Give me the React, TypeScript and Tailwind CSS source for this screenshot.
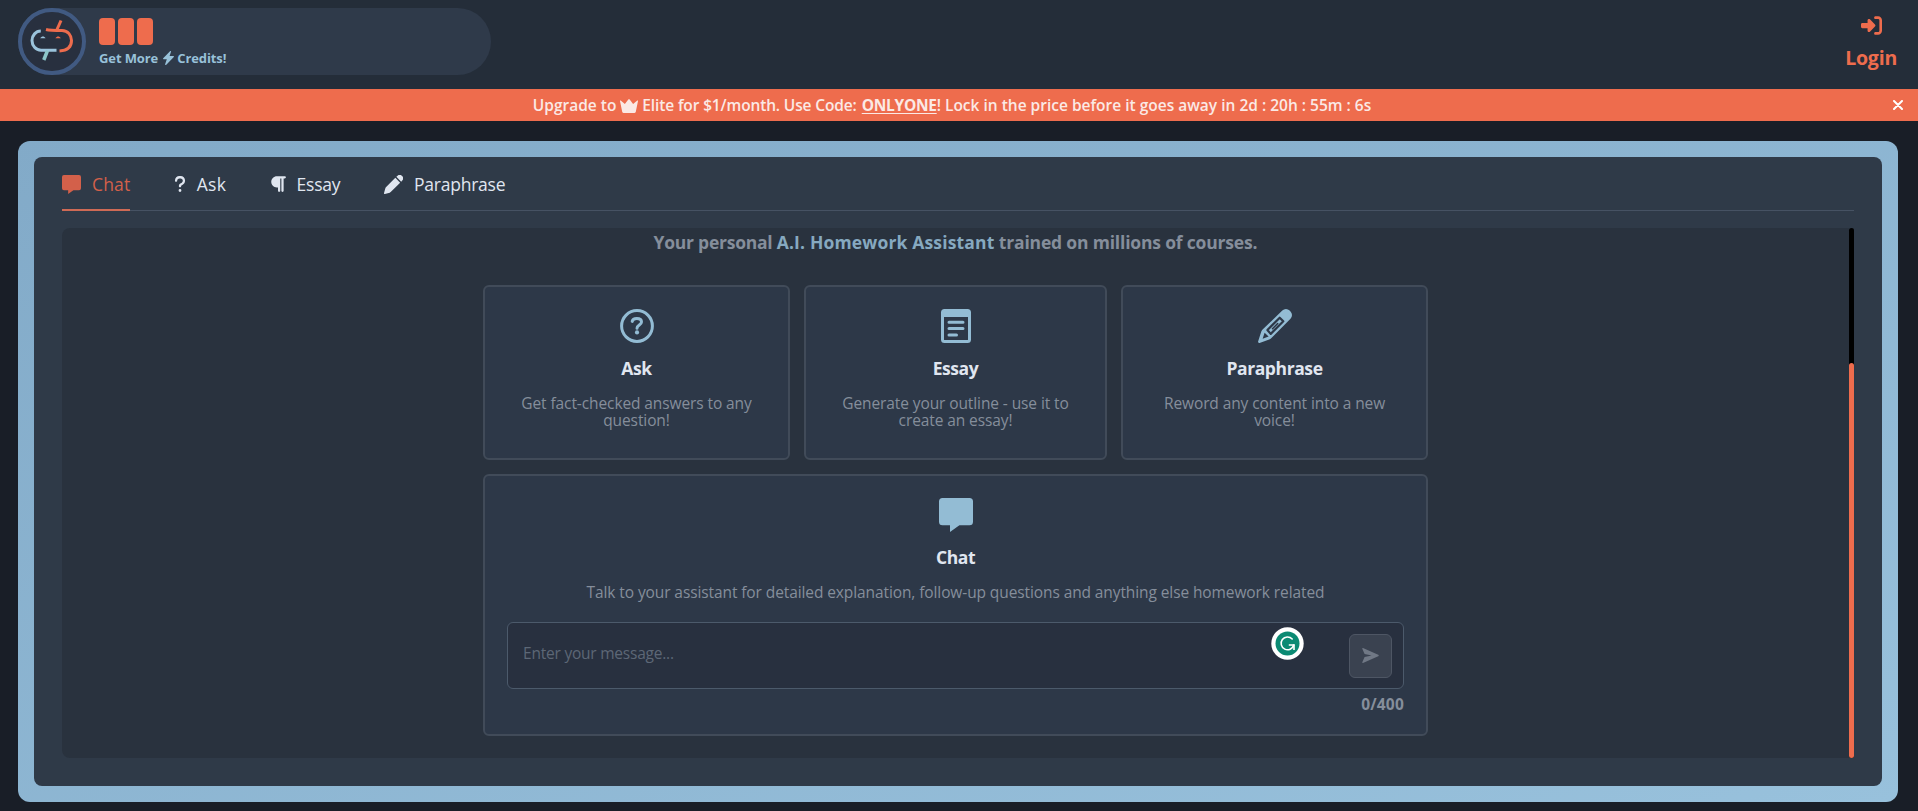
import React, { useState } from 'react';
import { FaParagraph, FaQuestion, FaRightToBracket } from 'react-icons/fa6';

type IconProps = { className?: string };

const ChatIcon: React.FC<IconProps> = ({ className }) => (
  <svg className={className} viewBox="0 0 34 34" fill="currentColor">
    <path d="M3.5 0h27A3.5 3.5 0 0 1 34 3.5v20.3a3.5 3.5 0 0 1-3.5 3.5H20.4L11 34v-6.7H3.5A3.5 3.5 0 0 1 0 23.8V3.5A3.5 3.5 0 0 1 3.5 0Z" />
  </svg>
);

const PenIcon: React.FC<IconProps> = ({ className }) => (
  <svg className={className} viewBox="2 2 20 20" fill="currentColor">
    <path d="M13.94 5 19 10.06 9.06 20a2.25 2.25 0 0 1-1 .58l-5.11 1.4a.75.75 0 0 1-.92-.93l1.4-5.11a2.25 2.25 0 0 1 .57-1L13.94 5Zm7.09-2.03a3.58 3.58 0 0 1 0 5.06l-.97.97L15 3.94l.97-.97a3.58 3.58 0 0 1 5.06 0Z" />
  </svg>
);

const AskCircleIcon: React.FC<IconProps> = ({ className }) => (
  <svg className={className} viewBox="0 0 34 34" fill="none" stroke="currentColor" strokeWidth={3}>
    <circle cx="17" cy="17" r="15.4" />
    <path d="M12.2 12.4c.4-2 2.2-2.9 4.6-2.9 2.8 0 4.7 1.3 4.7 3.5 0 2.9-4.5 3.1-4.5 6.2" strokeLinecap="round" />
    <circle cx="17" cy="23.4" r="2.1" fill="currentColor" stroke="none" />
  </svg>
);

const DocumentIcon: React.FC<IconProps> = ({ className }) => (
  <svg className={className} viewBox="0 0 34 34" fill="none" stroke="currentColor" strokeWidth={3}>
    <rect x="3.5" y="1.5" width="27" height="31" rx="2" />
    <path d="M3.5 1.5h27v6.5h-27z" fill="currentColor" stroke="none" />
    <path d="M10 13.2h14M10 19.5h14M10 26h7.5" strokeLinecap="round" />
  </svg>
);

const PencilIcon: React.FC<IconProps> = ({ className }) => (
  <svg className={className} viewBox="0 0 34 34" fill="none">
    <path
      d="M24.3 1.5a5.2 5.2 0 0 1 7.3 0l.9.9a5.2 5.2 0 0 1 0 7.3L13.2 29.2a5 5 0 0 1-2 1.2L1.6 33.9C.6 34.2-.2 33.4.1 32.4l3.2-9.8c.3-.8.7-1.4 1.3-2L24.3 1.5Z"
      fill="currentColor"
    />
    <path d="M21.7 8.7 25.3 12.3 12.7 24.9 9.4 21Z" stroke="#2d3848" strokeWidth={2.2} strokeLinejoin="round" fill="currentColor" />
    <path d="m14.5 19.7 5.2-5.2" stroke="#2d3848" strokeWidth={1.6} strokeLinecap="round" />
    <path d="m6.6 23.8-2 6 6-2.2Z" fill="#2d3848" />
  </svg>
);

const SendIcon: React.FC<IconProps> = ({ className }) => (
  <svg className={className} viewBox="0 0 17 15" fill="currentColor">
    <path d="M.3.8C.1.3.5-.1 1 .1l15.2 6.7c.7.3.7 1.1 0 1.4L1 14.9c-.5.2-.9-.2-.7-.7L2.6 9l7-1.5-7-1.5Z" />
  </svg>
);

const CrownIcon: React.FC<IconProps> = ({ className }) => (
  <svg className={className} viewBox="0 0 18 14" fill="currentColor">
    <path d="M.7 1.6 4.9 5.1 8.3.6c.4-.6 1-.6 1.4 0l3.4 4.5 4.2-3.5c.4-.3.8 0 .7.4L15.8 12.8c-.1.7-.6 1.1-1.3 1.1h-11c-.7 0-1.2-.4-1.3-1.1L0 2c-.1-.4.3-.7.7-.4Z" />
  </svg>
);

const BoltIcon: React.FC<IconProps> = ({ className }) => (
  <svg className={className} viewBox="0 0 11 14" fill="currentColor">
    <path d="M7 .2C7.5-.2 8.3.1 8 .8L6.6 5h3.7c.7 0 .9.6.5 1L3.3 13.7c-.6.5-1.4.1-1.1-.6L3.8 8.3H.6c-.6 0-.8-.6-.4-1Z" />
  </svg>
);

const Logo: React.FC<IconProps> = ({ className }) => (
  <svg className={className} viewBox="0 0 60 60" fill="none" strokeWidth={3}>
    <path d="M18.8 19c-5 0-8.8 4.500-8.8 9.500S13.800 38 19 38.200h15.500" stroke="#9ac3dc" />
    <path d="M25.500 38.500 21.800 48" stroke="#8cc6c8" strokeWidth={3.5} />
    <path d="M24 17.500c4 1 11 1 16 1 6 0 9.500 5 9.500 10 0 6-4 10-12 10.500" stroke="#ee6c4d" />
    <path d="m34.800 18 4.200-9.500" stroke="#ee6c4d" />
    <path d="M18.200 26.300c1.500-2.400 4-2.400 5.400 0Z" fill="#9ac3dc" />
    <path d="M33.400 26.300c1.500-2.400 4-2.400 5.400 0Z" fill="#ee6c4d" />
  </svg>
);

const tabs = [
  { name: 'Chat', icon: <ChatIcon className="size-[19px] mr-[11px]" />, spacing: 'tracking-[0.15px]' },
  { name: 'Ask', icon: <FaQuestion className="w-3 h-[18px] mr-[11px]" />, spacing: 'tracking-[0.2px]' },
  { name: 'Essay', icon: <FaParagraph className="w-4 h-[18px] mr-[11px]" />, spacing: 'tracking-[-0.2px]' },
  { name: 'Paraphrase', icon: <PenIcon className="size-[19px] mr-[11px]" />, spacing: 'tracking-[-0.22px]' },
];

const cards = [
  { title: 'Ask', text: 'Get fact-checked answers to any question!', icon: <AskCircleIcon className="size-[34px]" />, width: 'w-[307px]' },
  { title: 'Essay', text: 'Generate your outline - use it to create an essay!', icon: <DocumentIcon className="size-[34px]" />, width: 'w-[303px]' },
  { title: 'Paraphrase', text: 'Reword any content into a new voice!', icon: <PencilIcon className="size-[34px]" />, width: 'w-[307px]' },
];

const Header: React.FC = () => (
  <header className="h-[89px] shrink-0 flex items-start justify-between bg-[#242d39] pl-[18px] pr-[21px]">
    <div className="mt-2 flex w-[473px] h-[67px] rounded-full bg-[#2f3a4a]">
      <div className="w-[68px] h-[67px] rounded-full border-4 border-[#415a82] bg-[#28303f]">
        <Logo className="size-[60px]" />
      </div>
      <div className="ml-[13px] pt-[10px]">
        <div className="flex gap-[3px]">
          {[0, 1, 2].map((i) => (
            <div key={i} className="w-4 h-[27px] rounded bg-[#ee6c4d]" />
          ))}
        </div>
        <div className="mt-[3px] flex items-center text-[13px] leading-5 font-bold tracking-[-0.1px] text-[#98c1d9]">
          Get More
          <BoltIcon className="ml-[5px] mr-[3px] w-[11px] h-[14px]" />
          Credits!
        </div>
      </div>
    </div>
    <div className="mt-4 flex flex-col items-center text-[#ee6c4d]">
      <FaRightToBracket className="size-[21px] -mt-[1px]" />
      <span className="mt-[8px] text-[19.5px] leading-7 font-bold tracking-[-0.2px]">Login</span>
    </div>
  </header>
);

const Banner: React.FC = () => (
  <div className="h-8 shrink-0 flex items-center bg-[#ee6c4d] pr-[15px] text-[15.5px] font-semibold text-[#fbe9e5]">
    <div className="flex-1 flex items-center justify-center pt-px pl-[11px]">
      <span>Upgrade to</span>
      <CrownIcon className="mx-[4px] w-[18px] h-[14px]" />
      <span className="tracking-[-0.14px]">Elite for $1/month. Use Code:</span>
      <span className="ml-[5px] font-bold tracking-[-0.29px] underline underline-offset-2">ONLYONE</span>
      <span>! Lock in the price before it goes away in 2d : 20h : 55m : 6s</span>
    </div>
    <button aria-label="Close">
      <svg className="size-[10px]" viewBox="0 0 10 10" stroke="#fff" strokeWidth={2} strokeLinecap="round">
        <path d="m1 1 8 8M9 1 1 9" />
      </svg>
    </button>
  </div>
);

const CardTitle: React.FC<{ children: React.ReactNode }> = ({ children }) => (
  <h3 className="mt-[13px] text-[17.5px] leading-6 font-bold tracking-[-0.4px] text-[#e0e6f0]">{children}</h3>
);

const CardText: React.FC<{ children: React.ReactNode }> = ({ children }) => (
  <p className="mt-[15px] text-[15.5px] leading-[17px] tracking-[-0.1px] text-[#858e9b]">{children}</p>
);

export default function App() {
  const [activeTab, setActiveTab] = useState('Chat');
  const [message, setMessage] = useState('');

  return (
    <div className="h-[811px] flex flex-col overflow-hidden bg-[#191e27] font-['Open_Sans','Noto_Sans',sans-serif]">
      <Header />
      <Banner />

      <main className="mt-5 ml-[18px] mr-5 h-[661px] rounded-xl bg-linear-to-br from-[#82aac8] to-[#98c1dc] p-4">
        <div className="h-full rounded-lg bg-[#2f3a48] px-7">
          {/* Tabs */}
          <nav className="flex h-[54px] gap-[43.5px] border-b border-[#465263]">
            {tabs.map((tab) => (
              <button
                key={tab.name}
                onClick={() => setActiveTab(tab.name)}
                className={`flex h-[54px] items-center border-b-2 pt-[2px] text-[17.5px] ${tab.spacing} ${
                  activeTab === tab.name ? 'border-[#cf6a55] text-[#d3604a]' : 'border-transparent text-[#e0e6f0]'
                }`}
              >
                {tab.icon}
                {tab.name}
              </button>
            ))}
          </nav>

          {/* Scroll area */}
          <div className="mt-[17px] flex h-[530px] overflow-hidden rounded-l-lg bg-[#29323e]">
            <div className="flex-1 flex flex-col items-center pt-[2px]">
              <h2 className="text-[17.5px] leading-6 font-bold tracking-[-0.25px] text-[#858e9b]">
                Your personal <span className="tracking-[0.16px] text-[#86a9c0]">A.I. Homework Assistant</span>
                <span className="tracking-[-0.18px]"> trained on millions of courses.</span>
              </h2>

              <div className="mt-[31px] flex w-[945px] gap-[14px] text-center">
                {cards.map((card) => (
                  <div
                    key={card.title}
                    className={`${card.width} h-[175px] flex flex-col items-center rounded-md border-2 border-[#414b59] bg-[#2d3848] px-7 pt-[22px] text-[#93bcd4]`}
                  >
                    {card.icon}
                    <CardTitle>{card.title}</CardTitle>
                    <CardText>{card.text}</CardText>
                  </div>
                ))}
              </div>

              <div className="mt-[14px] w-[945px] h-[262px] flex flex-col items-center rounded-md border-2 border-[#414b59] bg-[#2d3848] px-[22px] pt-[22px] text-[#93bcd4]">
                <ChatIcon className="size-[34px]" />
                <CardTitle>Chat</CardTitle>
                <CardText>
                  Talk to your assistant for detailed explanation, follow-up questions and anything else homework related
                </CardText>
                <div className="relative mt-[21px] flex w-full h-[67px] items-center rounded-md border border-[#4c5a6b] bg-[#28303f] pl-[15px] pr-[11px]">
                  <input
                    value={message}
                    onChange={(e) => setMessage(e.target.value)}
                    placeholder="Enter your message..."
                    className="flex-1 pb-[3px] text-[15.5px] tracking-[-0.22px] text-[#e0e6f0] outline-none placeholder:text-[#5d6776]"
                  />
                  <button className="flex w-[43px] h-11 items-center justify-center rounded-md border border-[#4e5664] bg-[#3a4250] text-[#707885]">
                    <SendIcon className="w-[17px] h-[15px]" />
                  </button>
                  <svg className="absolute right-[99px] top-[4px] size-[33px]" viewBox="0 0 33 33" fill="none">
                    <circle cx="16.5" cy="16.5" r="16.2" fill="#fff" />
                    <circle cx="16.5" cy="16.5" r="12" fill="#0b8a73" />
                    <path d="M21.2 12A6.4 6.4 0 1 0 22.7 18" stroke="#fff" strokeWidth={1.6} strokeLinecap="round" />
                    <path d="M17.8 18h5.2v5" stroke="#fff" strokeWidth={1.6} />
                  </svg>
                </div>
                <div className="mt-[3px] self-end text-[15.5px] leading-6 font-bold tracking-[0.2px] text-[#858e9b]">0/400</div>
              </div>
            </div>

            {/* Scrollbar */}
            <div className="w-[5px] flex flex-col justify-end rounded-full bg-black">
              <div className="h-[395px] rounded-full bg-[#ee6c4d]" />
            </div>
          </div>
        </div>
      </main>
    </div>
  );
}
